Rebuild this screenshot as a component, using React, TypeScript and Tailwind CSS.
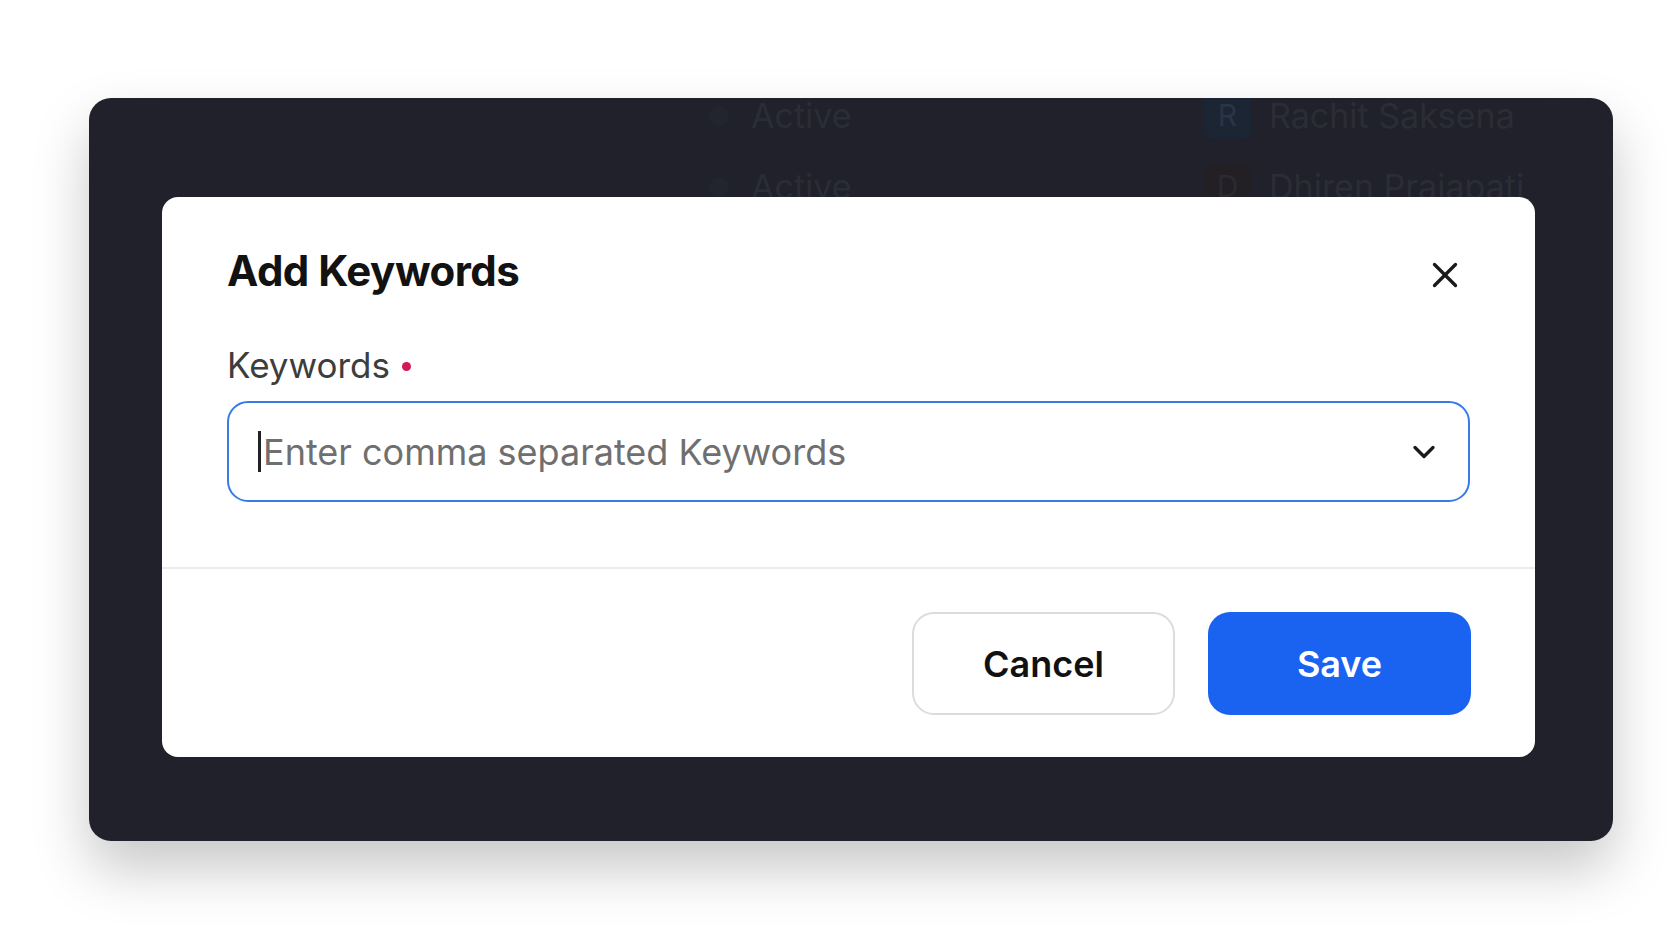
import { X, ChevronDown } from "lucide-react"

interface RowProps {
  initial: string
  name: string
  avatarClass: string
}

function BackdropRow({ initial, name, avatarClass }: RowProps) {
  return (
    <div className="flex h-[71px] items-center pl-[620px]">
      <span className="h-[20px] w-[20px] rounded-full bg-[#23252e]" />
      <span className="ml-[22px] w-[453px] text-[34px] leading-[40px] text-[#2b2d36]">Active</span>
      <span
        className={`flex h-[46px] w-[47px] items-center justify-center rounded-[8px] text-[30px] ${avatarClass}`}
      >
        {initial}
      </span>
      <span className="ml-[18px] text-[34px] leading-[40px] text-[#2b2d36]">{name}</span>
    </div>
  )
}

export default function App() {
  return (
    <div className="min-h-screen w-full bg-white pl-[89px] pt-[98px] font-['Inter',sans-serif]">
      <div className="relative h-[743px] w-[1524px] overflow-hidden rounded-[22px] bg-[#20212a] shadow-[0_28px_56px_rgba(0,0,0,0.22)]">
        {/* dimmed page behind the dialog */}
        <div className="-mt-[18px]">
          <BackdropRow initial="R" name="Rachit Saksena" avatarClass="bg-[#1b2534] text-[#2a3445]" />
          <BackdropRow initial="D" name="Dhiren Prajapati" avatarClass="bg-[#221f25] text-[#2c2a30]" />
          <BackdropRow initial="A" name="Ankit Sharma" avatarClass="bg-[#1b2534] text-[#2a3445]" />
        </div>

        <div className="absolute left-[73px] top-[99px] w-[1373px] rounded-[16px] bg-white">
          <div className="px-[65px] pb-[65px] pt-[49px]">
            <div className="flex items-center justify-between">
              <h2 className="text-[42px] font-bold leading-[50px] tracking-[-0.5px] text-[#121212]">
                Add Keywords
              </h2>
              <button className="mr-[4px] mt-[8px] text-[#1a1a1a]">
                <X size={42} strokeWidth={1.9} />
              </button>
            </div>

            <div className="mt-[48px] flex items-center text-[35px] leading-[42px] text-[#3d3d3d]">
              Keywords
              <span className="ml-[12px] mt-[2px] h-[9px] w-[9px] rounded-full bg-[#d3175b]" />
            </div>

            <div className="mt-[15px] flex h-[101px] items-center rounded-[21px] border-2 border-[#3a7ae6] pl-[29px] pr-[26px]">
              <span className="h-[41px] w-[3px] bg-[#222222]" />
              <span className="ml-[2px] text-[36px] leading-[44px] text-[#6f6f6f]">
                Enter comma separated Keywords
              </span>
              <ChevronDown className="ml-auto text-[#1a1a1a]" size={36} strokeWidth={2.2} />
            </div>
          </div>

          <div className="h-[2px] bg-[#ececec]" />

          <div className="flex justify-end gap-[33px] px-[64px] pb-[42px] pt-[43px]">
            <button className="h-[103px] w-[263px] rounded-[22px] border-2 border-[#dcdcdc] bg-white text-[36px] font-semibold text-[#111111]">
              Cancel
            </button>
            <button className="h-[103px] w-[263px] rounded-[22px] bg-[#1a63f1] text-[36px] font-semibold text-white">
              Save
            </button>
          </div>
        </div>
      </div>
    </div>
  )
}
